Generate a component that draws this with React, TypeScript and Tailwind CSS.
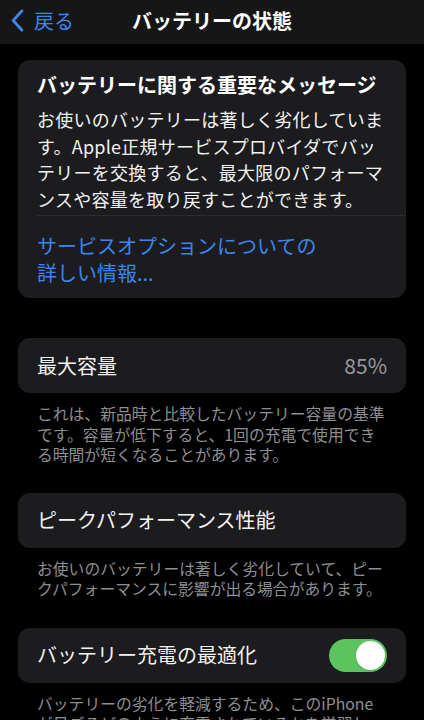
import type { FC, ReactNode } from 'react';

const font = { fontFamily: '"Noto Sans CJK JP", "Noto Sans", sans-serif' };

const BackChevron: FC = () => (
  <svg viewBox="0 0 14 24" className="w-[15px] h-[23px]" fill="none">
    <path d="M11.5 2 L2.5 12 L11.5 22" stroke="#3d85ee" strokeWidth="3" strokeLinecap="round" strokeLinejoin="round" />
  </svg>
);

const Toggle: FC<{ on: boolean }> = ({ on }) => (
  <div className={`w-[58px] h-[33px] rounded-full p-[2px] flex ${on ? 'bg-[#5bc45f] justify-end' : 'bg-[#39393d] justify-start'}`}>
    <div className="w-[29px] h-[29px] rounded-full bg-white shadow" />
  </div>
);

const Footer: FC<{ children: ReactNode }> = ({ children }) => (
  <p className="px-[37px] pt-[11px] text-[15.8px] leading-[20.5px] text-[#8e8e93]">{children}</p>
);

const Row: FC<{ children: ReactNode }> = ({ children }) => (
  <div className="mx-[18px] h-[55px] rounded-[12px] bg-[#1c1c1e] px-[19px] flex items-center justify-between">
    {children}
  </div>
);

export default function App() {
  return (
    <div className="w-[424px] h-[720px] overflow-hidden bg-black text-[#f2f2f2]" style={font}>
      {/* Navigation bar */}
      <div className="h-[44px] bg-[#161616] grid grid-cols-[1fr_auto_1fr] items-center pb-[3px]">
        <div className="flex items-center pl-[10px] gap-[9px]">
          <BackChevron />
          <span className="text-[20px] text-[#3d85ee]">戻る</span>
        </div>
        <h1 className="text-[20px] font-bold text-white">バッテリーの状態</h1>
        <div />
      </div>

      {/* Important message */}
      <div className="mx-[18px] mt-[16px] rounded-[12px] bg-[#1c1c1e] overflow-hidden">
        <div className="px-[19px] pt-[12px]">
          <h2 className="text-[20px] leading-[26px] font-bold text-white whitespace-nowrap">
            バッテリーに関する重要なメッセージ
          </h2>
          <p className="mt-[8px] text-[18px] leading-[26.5px] tracking-[0.25px] whitespace-nowrap">
            お使いのバッテリーは著しく劣化していま
            <br />
            す。Apple正規サービスプロバイダでバッ
            <br />
            テリーを交換すると、最大限のパフォーマ
            <br />
            ンスや容量を取り戻すことができます。
          </p>
        </div>
        <div className="ml-[19px] mt-[3px] h-px bg-[#2c2c2e]" />
        <p className="px-[19px] pt-[16px] pb-[12px] text-[20px] leading-[27px] text-[#3d85ee]">
          サービスオプションについての
          <br />
          詳しい情報...
        </p>
      </div>

      {/* Maximum capacity */}
      <div className="mt-[40px]">
        <Row>
          <span className="text-[20px]">最大容量</span>
          <span className="text-[21px] text-[#98989e]">85%</span>
        </Row>
        <Footer>
          これは、新品時と比較したバッテリー容量の基準
          <br />
          です。容量が低下すると、1回の充電で使用でき
          <br />
          る時間が短くなることがあります。
        </Footer>
      </div>

      {/* Peak performance */}
      <div className="mt-[27px]">
        <Row>
          <span className="text-[20px]">ピークパフォーマンス性能</span>
        </Row>
        <Footer>
          お使いのバッテリーは著しく劣化していて、ピー
          <br />
          クパフォーマンスに影響が出る場合があります。
        </Footer>
      </div>

      {/* Optimized charging */}
      <div className="mt-[28px]">
        <Row>
          <span className="text-[20px]">バッテリー充電の最適化</span>
          <Toggle on />
        </Row>
        <Footer>
          バッテリーの劣化を軽減するため、このiPhone
          <br />
          が日ごろどのように充電されているかを学習し、
          <br />
          必要になるまで80%を超える充電を待機します。
        </Footer>
      </div>
    </div>
  );
}
